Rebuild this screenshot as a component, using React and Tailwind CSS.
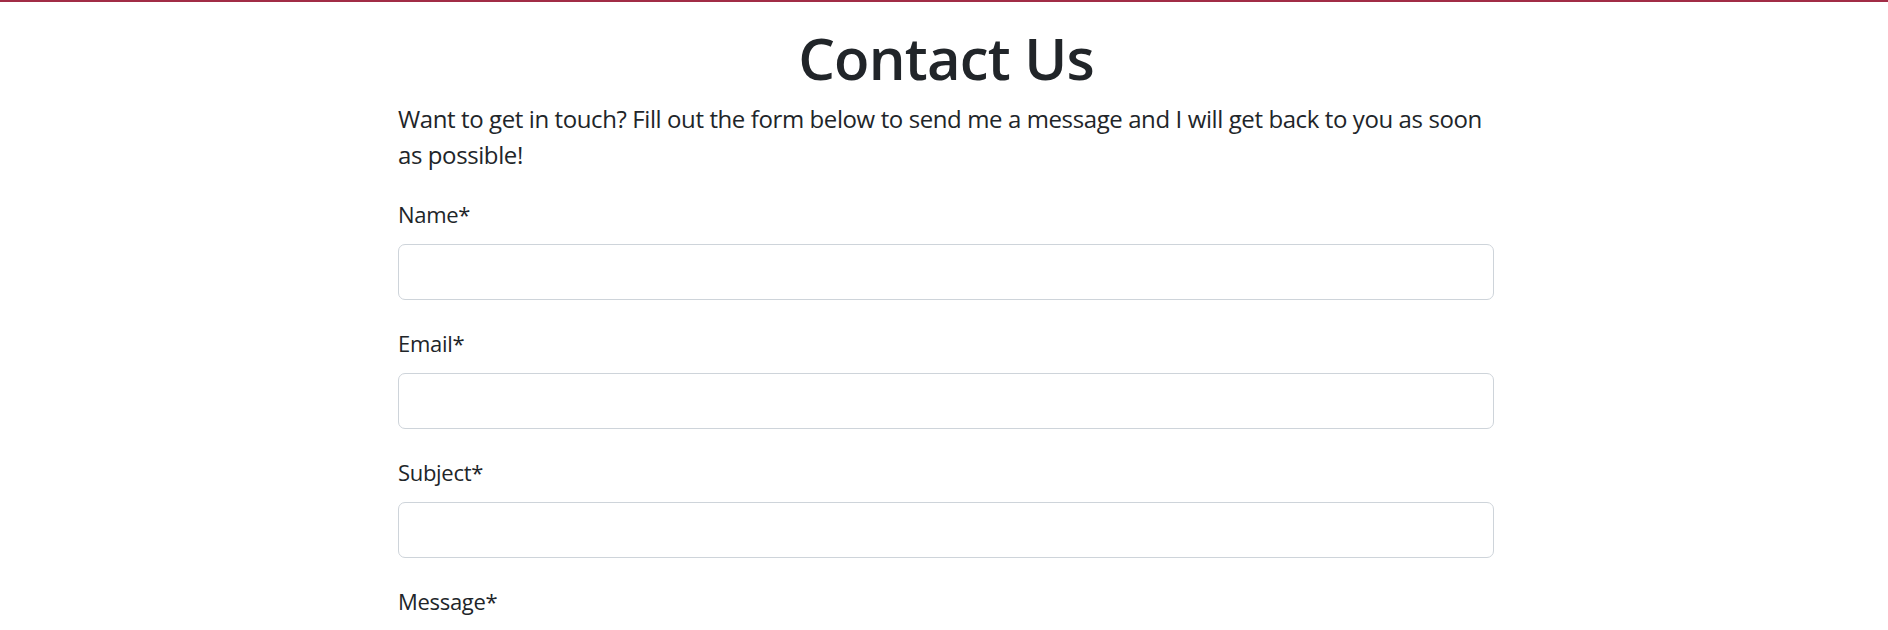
export default function App() {
  const fields = ['Name*', 'Email*', 'Subject*'];

  return (
    <div className="min-h-screen bg-white text-[#212529]" style={{ fontFamily: '"Open Sans", "Noto Sans", sans-serif' }}>
      {/* top accent bar */}
      <div className="h-[2px] bg-[#a12c46]" />

      <div className="mx-auto w-[1100px] pl-[4px]">
        <h1 className="mt-[20px] text-center text-[58px] leading-[72px] font-semibold tracking-[-0.8px]">
          Contact Us
        </h1>

        <p className="mt-[7px] text-[24px] leading-[36px] tracking-[-0.4px]">
          Want to get in touch? Fill out the form below to send me a message and I will get back to you as soon as possible!
        </p>

        <form className="mt-[25px]">
          {fields.map((label) => (
            <div key={label} className="mb-[27px]">
              <label className="block text-[22px] leading-[33px] tracking-[-0.3px]">{label}</label>
              <input
                type="text"
                className="mt-[13px] block h-[56px] w-full rounded-[7px] border border-[#ced4da] bg-white px-3 focus:outline-none"
              />
            </div>
          ))}
          <div>
            <label className="block text-[22px] leading-[33px] tracking-[-0.3px]">Message*</label>
            <textarea className="mt-[13px] block h-[160px] w-full rounded-[7px] border border-[#ced4da] bg-white px-3 focus:outline-none" />
          </div>
        </form>
      </div>
    </div>
  );
}
